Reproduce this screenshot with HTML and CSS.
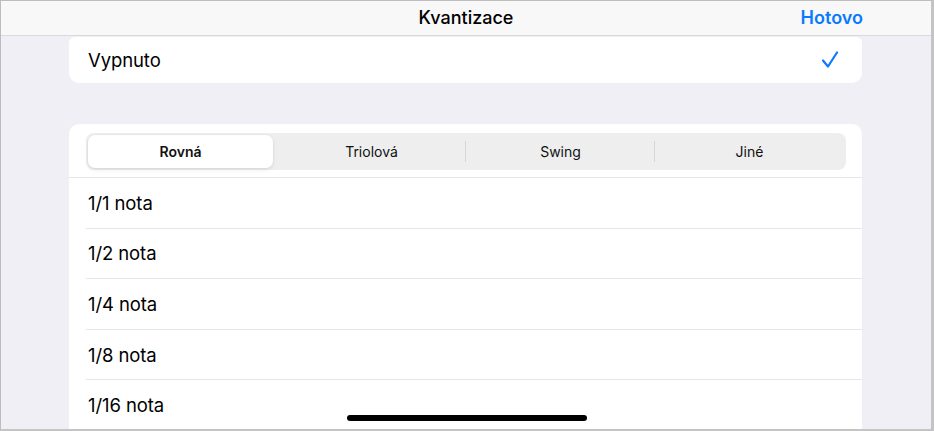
FILE: index.html
```html
<!DOCTYPE html>
<html lang="cs">
<head>
<meta charset="utf-8">
<title>Kvantizace</title>
<link rel="stylesheet" href="styles.css">
</head>
<body>
<div class="screen">
  <header class="nav">
    <span class="nav-spacer"></span>
    <h1 class="nav-title">Kvantizace</h1>
    <span class="nav-done">Hotovo</span>
  </header>
  <main class="content">
    <section class="card card-off">
      <div class="off-row">
        <span class="row-label">Vypnuto</span>
        <svg class="check" width="18" height="18" viewBox="0 0 18 18" aria-hidden="true">
          <polyline points="2,9.5 7,15.5 16,1.5" fill="none" stroke="#0a7aff" stroke-width="2.2" stroke-linecap="round" stroke-linejoin="round"/>
        </svg>
      </div>
    </section>
    <section class="card card-list">
      <div class="seg-wrap">
        <div class="seg">
          <div class="seg-item is-selected">Rovná</div>
          <div class="seg-item">Triolová</div>
          <div class="seg-item has-divider">Swing</div>
          <div class="seg-item has-divider">Jiné</div>
        </div>
      </div>
      <ul class="rows">
        <li class="row"><span class="row-label">1/1 nota</span></li>
        <li class="row"><span class="row-label">1/2 nota</span></li>
        <li class="row"><span class="row-label">1/4 nota</span></li>
        <li class="row"><span class="row-label">1/8 nota</span></li>
        <li class="row"><span class="row-label">1/16 nota</span></li>
      </ul>
    </section>
  </main>
  <div class="home-indicator"></div>
</div>
</body>
</html>
```

FILE: styles.css
```css
* { box-sizing: border-box; }

html, body {
  margin: 0;
  padding: 0;
  background: #ffffff;
}

body {
  font-family: Inter, "Liberation Sans", Arial, sans-serif;
  color: #000;
}

.screen {
  position: relative;
  width: 934px;
  height: 431px;
  overflow: hidden;
  background: #f0eff5;
  border-left: 1px solid #bdbdbd;
  border-top: 1px solid #bdbdbd;
  border-right: 3px solid #c4c4c4;
  border-bottom: 2px solid #c4c4c4;
  display: flex;
  flex-direction: column;
}

.nav {
  flex: 0 0 auto;
  height: 35px;
  background: #f8f8f8;
  border-bottom: 1px solid #dadada;
  display: grid;
  grid-template-columns: 1fr auto 1fr;
  align-items: center;
  padding: 0 68px 1px 68px;
}

.nav-title {
  margin: 0;
  font-size: 18px;
  font-weight: 500;
  letter-spacing: 0;
}

.nav-done {
  justify-self: end;
  color: #0a7aff;
  font-size: 18px;
  font-weight: 600;
}

.content {
  flex: 1 1 auto;
  padding: 1px 69px 0 68px;
  display: flex;
  flex-direction: column;
}

.card {
  background: #fff;
}

.card-off {
  height: 46px;
  border-radius: 6px 6px 10px 10px;
  margin-bottom: 41px;
}

.off-row {
  height: 100%;
  display: flex;
  align-items: center;
  justify-content: space-between;
  padding: 0 23px 0 19px;
}

.row-label {
  font-size: 18.5px;
  font-weight: 400;
  letter-spacing: -0.1px;
}

.check {
  display: block;
  margin-top: 0;
}

.card-list {
  flex: 1 1 auto;
  border-radius: 10px 10px 0 0;
}

.seg-wrap {
  padding: 9px 16px 7px 17px;
  border-bottom: 1px solid #e6e6e8;
}

.seg {
  height: 37px;
  background: #eeeeef;
  border-radius: 8px;
  padding: 2px;
  display: grid;
  grid-template-columns: repeat(4, 1fr);
}

.seg-item {
  position: relative;
  display: flex;
  align-items: center;
  justify-content: center;
  font-size: 14px;
  color: #111;
}

.seg-item.is-selected {
  background: #fff;
  border-radius: 7px;
  font-weight: 600;
  margin-right: 4px;
  box-shadow: 0 2px 4px rgba(0, 0, 0, 0.08), 0 0 0 0.5px rgba(0, 0, 0, 0.04);
}

.seg-item.has-divider::before {
  content: "";
  position: absolute;
  left: -1px;
  top: 6px;
  bottom: 6px;
  width: 1px;
  background: #d6d6d8;
}

.rows {
  list-style: none;
  margin: 0;
  padding: 0 0 0 17px;
}

.row {
  height: 50.6px;
  display: flex;
  align-items: center;
  border-bottom: 1px solid #e6e6e8;
  padding-left: 2px;
}

.home-indicator {
  position: absolute;
  left: 346px;
  top: 414px;
  width: 240px;
  height: 6px;
  border-radius: 3px;
  background: #000;
}
```
